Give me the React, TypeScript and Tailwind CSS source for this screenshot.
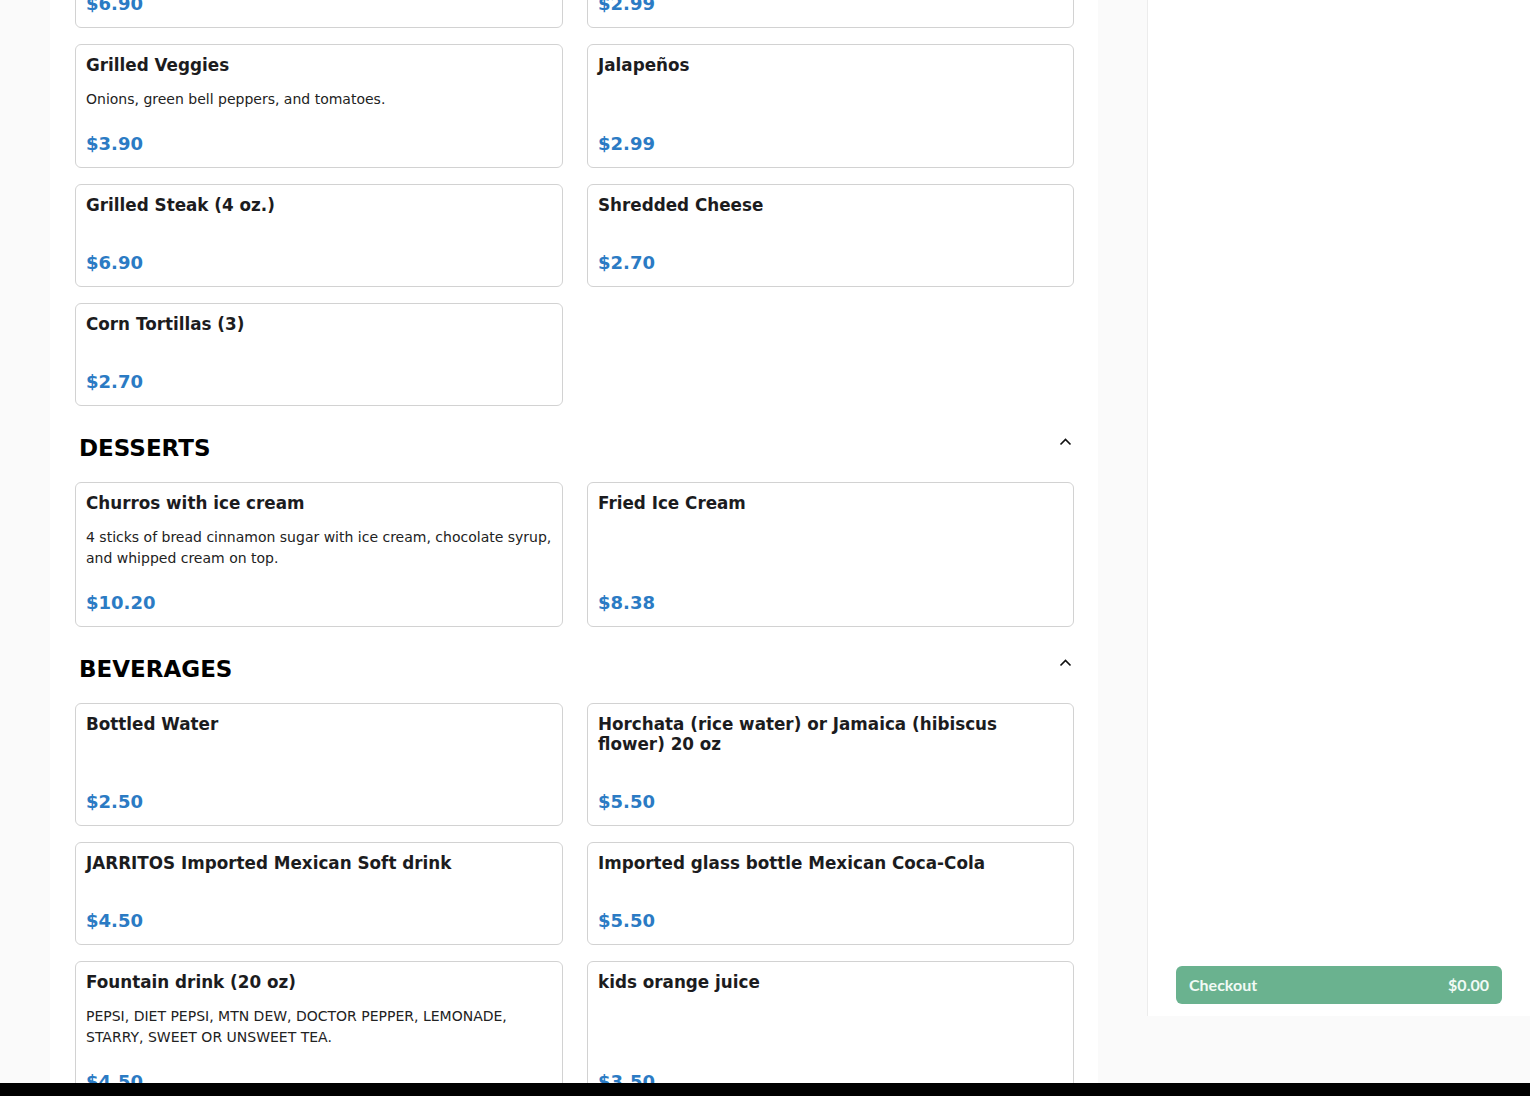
type Item = { name: string; desc?: string; price: string }
type Section = { title?: string; items: Item[] }

const sections: Section[] = [
  {
    items: [
      { name: 'Grilled Chicken (4 oz.)', price: '$6.90' },
      { name: 'Sour Cream', price: '$2.99' },
      { name: 'Grilled Veggies', desc: 'Onions, green bell peppers, and tomatoes.', price: '$3.90' },
      { name: 'Jalapeños', price: '$2.99' },
      { name: 'Grilled Steak (4 oz.)', price: '$6.90' },
      { name: 'Shredded Cheese', price: '$2.70' },
      { name: 'Corn Tortillas (3)', price: '$2.70' },
    ],
  },
  {
    title: 'DESSERTS',
    items: [
      {
        name: 'Churros with ice cream',
        desc: '4 sticks of bread cinnamon sugar with ice cream, chocolate syrup, and whipped cream on top.',
        price: '$10.20',
      },
      { name: 'Fried Ice Cream', price: '$8.38' },
    ],
  },
  {
    title: 'BEVERAGES',
    items: [
      { name: 'Bottled Water', price: '$2.50' },
      { name: 'Horchata (rice water) or Jamaica (hibiscus flower) 20 oz', price: '$5.50' },
      { name: 'JARRITOS Imported Mexican Soft drink', price: '$4.50' },
      { name: 'Imported glass bottle Mexican Coca-Cola', price: '$5.50' },
      {
        name: 'Fountain drink (20 oz)',
        desc: 'PEPSI, DIET PEPSI, MTN DEW, DOCTOR PEPPER, LEMONADE, STARRY, SWEET OR UNSWEET TEA.',
        price: '$4.50',
      },
      { name: 'kids orange juice', price: '$3.50' },
    ],
  },
]

function Card({ item }: { item: Item }) {
  return (
    <div className="border border-[#d2d2d2] rounded-[6px] bg-white px-[10px] pt-[10px] pb-[9px] flex flex-col">
      <div className="text-[16.8px] leading-[20px] font-bold text-[#1c1c1e]">{item.name}</div>
      <div className="mt-[14px] mb-[20px] text-[14px] leading-[21px] text-[#222]">{item.desc}</div>
      <div className="mt-auto text-[18px] leading-[28px] font-bold text-[#2b7bc4]">{item.price}</div>
    </div>
  )
}

function Chevron() {
  return (
    <svg width="13" height="9" viewBox="0 0 13 9" className="mt-[3px]">
      <polyline points="1.5,7.5 6.5,2.5 11.5,7.5" fill="none" stroke="#111" strokeWidth="1.6" />
    </svg>
  )
}

export default function App() {
  return (
    <div className="relative h-[1096px] overflow-hidden bg-[#fafafa] flex font-['DejaVu_Sans',sans-serif]">
      <div className="w-[50px] shrink-0" />
      <main className="w-[1048px] shrink-0 bg-white pl-[25px]">
        <div className="-mt-[75px]">
          {sections.map((s, i) => (
            <section key={i}>
              {s.title && (
                <div className="w-[999px] flex items-start justify-between pl-1 pr-[2px] pt-[28px] pb-[20px]">
                  <h2 className="text-[23px] leading-[28px] font-bold text-black">{s.title}</h2>
                  <Chevron />
                </div>
              )}
              <div className="grid grid-cols-[488px_487px] gap-x-6 gap-y-4">
                {s.items.map((it) => (
                  <Card key={it.name} item={it} />
                ))}
              </div>
            </section>
          ))}
        </div>
      </main>
      <div className="w-[49px] shrink-0" />
      <aside className="w-[383px] h-[1016px] bg-white border-l border-[#ececec] flex flex-col justify-end px-[28px] pb-[12px]">
        <button className="h-[38px] rounded-[6px] bg-[#6ab28f] px-[13px] flex items-center justify-between text-[16px] font-bold text-[#f1faf5] font-['Lato',sans-serif]">
          <span>Checkout</span>
          <span>$0.00</span>
        </button>
      </aside>
      <div className="absolute bottom-0 left-0 right-0 h-[13px] bg-black" />
    </div>
  )
}
